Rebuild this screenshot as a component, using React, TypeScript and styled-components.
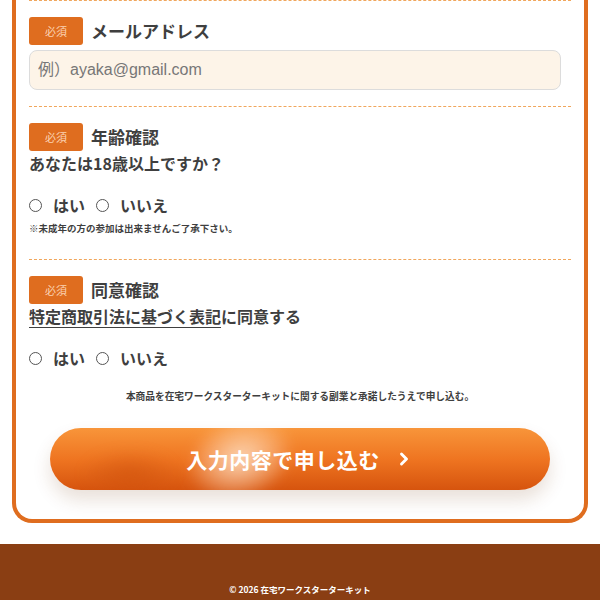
import styled, { createGlobalStyle } from "styled-components";
import { ChevronRight } from "lucide-react";

const GlobalStyle = createGlobalStyle`
  html, body {
    margin: 0;
    padding: 0;
    background: #ffffff;
  }
  body {
    font-family: "Noto Sans CJK JP", "Noto Sans", sans-serif;
    color: #3f3f3f;
  }
  * {
    box-sizing: border-box;
  }
`;

const Page = styled.div`
  display: flex;
  flex-direction: column;
  width: 600px;
`;

const Card = styled.div`
  margin: 0 12px;
  padding: 0 13px 29px;
  border: 4px solid #df6d1f;
  border-top: none;
  border-radius: 0 0 20px 20px;
  background: #ffffff;
`;

const Section = styled.section<{ $padTop: number; $padBottom: number }>`
  display: flex;
  flex-direction: column;
  padding-top: ${(p) => p.$padTop}px;
  padding-bottom: ${(p) => p.$padBottom}px;
  border-top: 1px dashed #f0a65c;
`;

const FieldHead = styled.div`
  display: flex;
  align-items: center;
  gap: 8px;
  height: 28px;
`;

const Badge = styled.span`
  display: flex;
  align-items: center;
  justify-content: center;
  width: 54px;
  height: 28px;
  border-radius: 3px;
  background: #df6d1f;
  color: #fbd2b2;
  font-size: 11px;
  font-weight: 400;
`;

const FieldTitle = styled.h3`
  margin: 0;
  font-size: 17px;
  font-weight: 700;
  line-height: 28px;
  color: #3f3f3f;
`;

const EmailInput = styled.input`
  margin: 5px 10px 0 0;
  height: 40px;
  padding: 0 8px;
  border: 1px solid #dcdcdc;
  border-radius: 8px;
  background: #fdf4e8;
  font-family: "Liberation Sans", "Noto Sans CJK JP", sans-serif;
  font-size: 16px;
  color: #333;
  outline: none;

  &::placeholder {
    color: #777777;
  }
`;

const Question = styled.p`
  margin: 0;
  font-size: 16px;
  font-weight: 700;
  line-height: 24px;
  color: #3f3f3f;
`;

const DocLink = styled.a`
  color: #3f3f3f;
  text-decoration: underline;
  text-decoration-thickness: 1px;
  text-underline-offset: 4px;
`;

const RadioRow = styled.div<{ $gapTop: number }>`
  display: flex;
  align-items: center;
  height: 24px;
  margin-top: ${(p) => p.$gapTop}px;
`;

const RadioLabel = styled.label`
  display: flex;
  align-items: center;
  gap: 11px;
  margin-right: 11px;
  font-size: 16px;
  font-weight: 700;
  color: #3f3f3f;
`;

const Radio = styled.input`
  appearance: none;
  margin: 0;
  width: 13px;
  height: 13px;
  border: 1px solid #555;
  border-radius: 50%;
  background: #fff;
`;

const Note = styled.p`
  margin: 3px 0 0;
  font-size: 9.5px;
  font-weight: 700;
  line-height: 16px;
  color: #3f3f3f;
`;

const Consent = styled.p`
  margin: 18px 0 0;
  text-align: center;
  font-size: 9.7px;
  font-weight: 700;
  line-height: 16px;
  color: #3f3f3f;
`;

const SubmitButton = styled.button`
  position: relative;
  overflow: hidden;
  display: flex;
  align-items: center;
  justify-content: center;
  gap: 14px;
  width: 500px;
  height: 62px;
  margin: 24px auto 0;
  padding-left: 6px;
  border: none;
  border-radius: 31px;
  background: linear-gradient(180deg, #f8953a 0%, #ef7521 50%, #d6540e 100%);
  box-shadow: 0 10px 18px rgba(120, 60, 20, 0.16);
  color: #ffffff;
  font-family: "Noto Sans CJK JP", sans-serif;
  font-size: 21px;
  font-weight: 700;
  letter-spacing: 0.5px;
  cursor: pointer;

  &::before {
    content: "";
    position: absolute;
    top: -10px;
    bottom: -10px;
    left: 140px;
    width: 100px;
    background: radial-gradient(
      ellipse at center,
      rgba(255, 238, 220, 0.8) 0%,
      rgba(255, 222, 192, 0.4) 45%,
      rgba(255, 255, 255, 0) 75%
    );
    transform: skewX(-12deg);
    filter: blur(6px);
  }

  &::after {
    content: "";
    position: absolute;
    left: 30px;
    top: 20px;
    width: 100px;
    height: 50px;
    background: radial-gradient(ellipse, rgba(200, 75, 10, 0.45), rgba(200, 75, 10, 0) 70%);
    filter: blur(6px);
  }

  span,
  svg {
    position: relative;
    z-index: 1;
  }
`;

const Footer = styled.footer`
  margin-top: 21px;
  height: 60px;
  padding-top: 39px;
  background: #8a3e13;
  color: #ffffff;
  text-align: center;
  font-size: 8.5px;
  font-weight: 700;
`;

function App() {
  return (
    <Page>
      <GlobalStyle />
      <Card>
        <Section $padTop={16} $padBottom={16}>
          <FieldHead>
            <Badge>必須</Badge>
            <FieldTitle>メールアドレス</FieldTitle>
          </FieldHead>
          <EmailInput type="email" placeholder="例）ayaka@gmail.com" />
        </Section>

        <Section $padTop={16} $padBottom={23}>
          <FieldHead>
            <Badge>必須</Badge>
            <FieldTitle>年齢確認</FieldTitle>
          </FieldHead>
          <Question>あなたは18歳以上ですか？</Question>
          <RadioRow $gapTop={18}>
            <RadioLabel>
              <Radio type="radio" name="age" />
              はい
            </RadioLabel>
            <RadioLabel>
              <Radio type="radio" name="age" />
              いいえ
            </RadioLabel>
          </RadioRow>
          <Note>※未成年の方の参加は出来ませんご了承下さい。</Note>
        </Section>

        <Section $padTop={16} $padBottom={0}>
          <FieldHead>
            <Badge>必須</Badge>
            <FieldTitle>同意確認</FieldTitle>
          </FieldHead>
          <Question>
            <DocLink href="#">特定商取引法に基づく表記</DocLink>に同意する
          </Question>
          <RadioRow $gapTop={18}>
            <RadioLabel>
              <Radio type="radio" name="agree" />
              はい
            </RadioLabel>
            <RadioLabel>
              <Radio type="radio" name="agree" />
              いいえ
            </RadioLabel>
          </RadioRow>
          <Consent>
            本商品を在宅ワークスターターキットに関する副業と承諾したうえで申し込む。
          </Consent>
        </Section>

        <SubmitButton type="button">
          <span>入力内容で申し込む</span>
          <ChevronRight size={20} strokeWidth={3.5} />
        </SubmitButton>
      </Card>
      <Footer>© 2026 在宅ワークスターターキット</Footer>
    </Page>
  );
}

export default App;
